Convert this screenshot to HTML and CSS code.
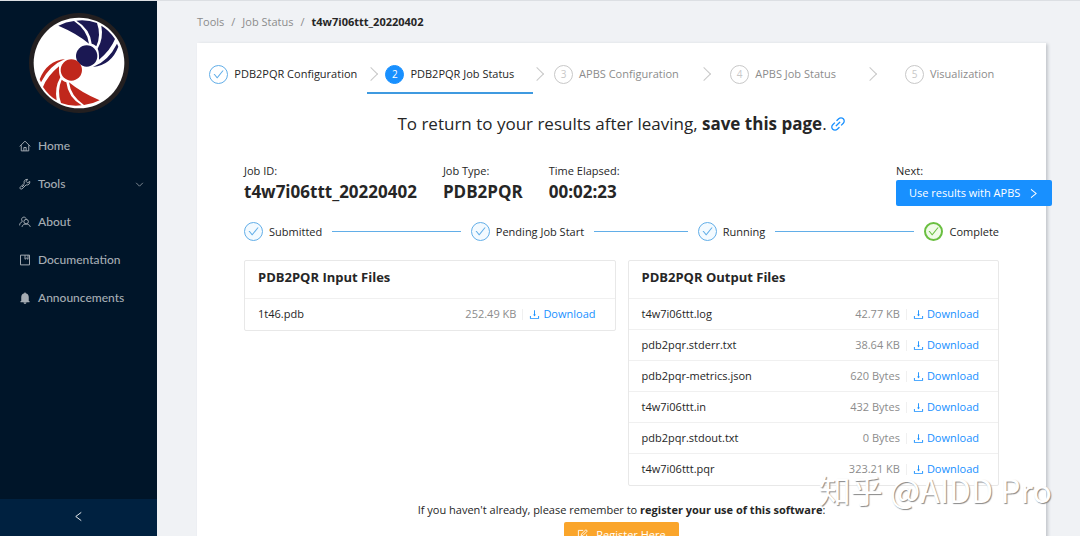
FILE: index.html
```html
<!DOCTYPE html>
<html lang="en">
<head>
  <meta charset="UTF-8" />
  <meta name="viewport" content="width=device-width, initial-scale=1.0" />
  <title>Job Status | t4w7i06ttt_20220402</title>
  <link rel="stylesheet" href="styles.css">
</head>
<body>
  <!-- shared icons -->
  <svg class="sprite" aria-hidden="true">
    <symbol id="check" viewBox="64 64 896 896"><path d="M912 190h-69.9c-9.8 0-19.1 4.5-25.1 12.2L404.7 724.5 207 474a32 32 0 00-25.1-12.2H112c-6.7 0-10.4 7.7-6.3 12.9l273.9 347c12.8 16.2 37.4 16.2 50.3 0l488.4-618.9c4.1-5.1.4-12.8-6.3-12.8z"/></symbol>
    <symbol id="right" viewBox="64 64 896 896"><path d="M765.7 486.8L314.9 134.7A7.97 7.97 0 00302 141v77.3c0 4.9 2.3 9.6 6.1 12.6l360 281.1-360 281.1c-3.9 3-6.1 7.7-6.1 12.6V883c0 6.7 7.7 10.4 12.9 6.3l450.8-352.1a31.96 31.96 0 000-50.4z"/></symbol>
    <symbol id="download" viewBox="64 64 896 896"><path d="M505.7 661a8 8 0 0012.6 0l112-141.7c4.1-5.2.4-12.9-6.3-12.9h-74.1V168c0-4.4-3.6-8-8-8h-60c-4.4 0-8 3.6-8 8v338.3H400c-6.7 0-10.4 7.7-6.3 12.9l112 141.8zM878 626h-60c-4.4 0-8 3.6-8 8v154H214V634c0-4.4-3.6-8-8-8h-60c-4.4 0-8 3.6-8 8v198c0 17.7 14.3 32 32 32h684c17.7 0 32-14.3 32-32V634c0-4.4-3.6-8-8-8z"/></symbol>
  </svg>

  <aside class="sidebar">
    <a class="logo" href="#" aria-label="Home page">
      <svg viewBox="84 36 306 306">
        <circle cx="237" cy="189" r="150" fill="#231f20"/>
        <circle cx="237" cy="189" r="136" fill="#fff"/>
        <g fill="#1b1853">
          <path d="M175 77Q198 65 222 63Q262 90 267 131Q230 100 175 77Z"/>
          <path d="M229 62Q262 58 291 69Q304 105 289 139Q281 132 275 131Q270 86 229 62Z"/>
          <path d="M304 77Q328 91 345 117Q332 150 297 179Q298 157 293 146Q311 115 304 77Z"/>
          <path d="M351 131L355 140Q334 195 279 201Q326 182 351 131Z"/>
          <circle cx="260" cy="168" r="32"/>
        </g>
        <g fill="#c0271c" transform="rotate(180 237 189)">
          <path d="M175 77Q198 65 222 63Q262 90 267 131Q230 100 175 77Z"/>
          <path d="M229 62Q262 58 291 69Q304 105 289 139Q281 132 275 131Q270 86 229 62Z"/>
          <path d="M304 77Q328 91 345 117Q332 150 297 179Q298 157 293 146Q311 115 304 77Z"/>
          <path d="M351 131L355 140Q334 195 279 201Q326 182 351 131Z"/>
          <circle cx="260" cy="168" r="32"/>
        </g>
      </svg>
    </a>
    <nav class="menu">
      <a href="#">
        <svg class="line" viewBox="0 0 16 16"><path d="M1 8.500L8 1.500l7 7M3 7v7.500h10V7M6.500 14.500V10h3v4.500"/></svg>
        Home
      </a>
      <a href="#">
        <svg class="line" viewBox="0 0 16 16"><path d="M1.500 12.500L7 7C6 4 8 1.500 11.500 1.800L9.500 4.500l2 2 2.800-2C15 7.500 12.500 10 9.500 9.200L4 14.500c-1.500 1-3.500-.5-2.500-2zM4 12l3-3"/></svg>
        Tools
        <svg class="line arrow" viewBox="0 0 16 16"><path d="M2 5l6 6 6-6"/></svg>
      </a>
      <a href="#">
        <svg class="line" viewBox="0 0 16 16"><circle cx="9.500" cy="7.500" r="3"/><path d="M4 14.500c.5-5 10.500-5 11 0M5.500 7.500C2 6 3.500 1.500 6.500 1.500c1.500 0 2.500.8 3 2M.8 12.500c.2-2.500 1.200-4 3.200-4.800"/></svg>
        About
      </a>
      <a href="#">
        <svg class="line" viewBox="0 0 16 16"><path d="M2 1.500h12v13H2zM8 1.500v5.500l2-1.500L12 7V1.500"/></svg>
        Documentation
      </a>
      <a href="#">
        <svg class="solid" viewBox="0 0 16 16"><path d="M8 0l1 1.500c2.500.5 4 2.500 4 5V12h1v1.500H2V12h1V6.500c0-2.500 1.500-4.500 4-5zM6 14h4c0 2.500-4 2.500-4 0z"/></svg>
        Announcements
      </a>
    </nav>
    <button class="trigger" aria-label="Collapse menu">
      <svg class="line" viewBox="0 0 16 16"><path d="M12 2L4 8l8 6"/></svg>
    </button>
  </aside>

  <main>
    <nav class="breadcrumb">
      <a href="#">Tools</a><span>/</span><a href="#">Job Status</a><span>/</span><b>t4w7i06ttt_20220402</b>
    </nav>

    <section class="panel">
      <ol class="workflow">
        <li class="done"><span class="dot"><svg><use href="#check"/></svg></span>PDB2PQR Configuration</li>
        <li class="active"><span class="dot">2</span>PDB2PQR Job Status</li>
        <li><span class="dot">3</span>APBS Configuration</li>
        <li><span class="dot">4</span>APBS Job Status</li>
        <li><span class="dot">5</span>Visualization</li>
      </ol>

      <h2>
        To return to your results after leaving, <b>save this page</b>.<a href="#" aria-label="Link to this page"><svg viewBox="64 64 896 896"><path d="M574 665.4a8.03 8.03 0 00-11.3 0L446.5 781.6c-53.8 53.8-144.6 59.5-204 0-59.5-59.5-53.8-150.2 0-204l116.2-116.2c3.1-3.1 3.1-8.2 0-11.3l-39.8-39.8a8.03 8.03 0 00-11.3 0L191.4 526.5c-84.6 84.6-84.6 221.5 0 306s221.5 84.6 306 0l116.2-116.2c3.1-3.1 3.1-8.2 0-11.3L574 665.4zm258.6-474c-84.6-84.6-221.5-84.6-306 0L410.3 307.6a8.03 8.03 0 000 11.3l39.7 39.7c3.1 3.1 8.2 3.1 11.3 0l116.2-116.2c53.8-53.8 144.6-59.5 204 0 59.5 59.5 53.8 150.2 0 204L665.3 562.6a8.03 8.03 0 000 11.3l39.8 39.8c3.1 3.1 8.2 3.1 11.3 0l116.2-116.2c84.5-84.6 84.5-221.5 0-306.1zM610.1 372.3a8.03 8.03 0 00-11.3 0L372.3 598.7a8.03 8.03 0 000 11.3l39.6 39.6c3.1 3.1 8.2 3.1 11.3 0l226.4-226.4c3.1-3.1 3.1-8.2 0-11.3l-39.5-39.6z"/></svg></a>
      </h2>

      <div class="content">
        <div class="job-info">
          <div>Job ID:<strong>t4w7i06ttt_20220402</strong></div>
          <div>Job Type:<strong>PDB2PQR</strong></div>
          <div>Time Elapsed:<strong>00:02:23</strong></div>
          <div class="next">Next:<button class="btn primary">Use results with APBS <svg><use href="#right"/></svg></button></div>
        </div>

        <ol class="progress">
          <li><span class="dot"><svg><use href="#check"/></svg></span>Submitted</li>
          <li><span class="dot"><svg><use href="#check"/></svg></span>Pending Job Start</li>
          <li><span class="dot"><svg><use href="#check"/></svg></span>Running</li>
          <li class="complete"><span class="dot"><svg><use href="#check"/></svg></span>Complete</li>
        </ol>

        <div class="files">
          <div class="file-card">
            <h3>PDB2PQR Input Files</h3>
            <table>
              <tr><td>1t46.pdb</td><td class="size">252.49 KB</td><td class="get"><a href="#"><svg><use href="#download"/></svg>Download</a></td></tr>
            </table>
          </div>
          <div class="file-card">
            <h3>PDB2PQR Output Files</h3>
            <table>
              <tr><td>t4w7i06ttt.log</td><td class="size">42.77 KB</td><td class="get"><a href="#"><svg><use href="#download"/></svg>Download</a></td></tr>
              <tr><td>pdb2pqr.stderr.txt</td><td class="size">38.64 KB</td><td class="get"><a href="#"><svg><use href="#download"/></svg>Download</a></td></tr>
              <tr><td>pdb2pqr-metrics.json</td><td class="size">620 Bytes</td><td class="get"><a href="#"><svg><use href="#download"/></svg>Download</a></td></tr>
              <tr><td>t4w7i06ttt.in</td><td class="size">432 Bytes</td><td class="get"><a href="#"><svg><use href="#download"/></svg>Download</a></td></tr>
              <tr><td>pdb2pqr.stdout.txt</td><td class="size">0 Bytes</td><td class="get"><a href="#"><svg><use href="#download"/></svg>Download</a></td></tr>
              <tr><td>t4w7i06ttt.pqr</td><td class="size">323.21 KB</td><td class="get"><a href="#"><svg><use href="#download"/></svg>Download</a></td></tr>
            </table>
          </div>
        </div>

        <div class="register">
          <p>If you haven't already, please remember to <b>register your use of this software</b>:</p>
          <button class="btn orange"><svg class="line" viewBox="0 0 16 16"><path d="M9 2H2v12h12V8M6 10l.5-2.500L13 1l2 2-6.500 6.500z"/></svg> Register Here</button>
        </div>
      </div>
    </section>
  </main>

  <div class="watermark">知乎 @AIDD Pro</div>
</body>
</html>
```

FILE: styles.css
```css
:root {
  --navy: #001529;
  --navy-light: #002140;
  --blue: #1890ff;
  --blue-soft: #62aee8;
  --green: #6abf40;
  --orange: #faa52b;
  --text: #262626;
  --muted: #8c8c8c;
  --line: #e8e8e8;
}

* {
  margin: 0;
  padding: 0;
  box-sizing: border-box;
}

body {
  font-family: "Open Sans", "Noto Sans", sans-serif;
  font-size: 11px;
  line-height: 18px;
  color: var(--text);
  background: #f0f2f5;
  height: 100vh;
  display: flex;
  overflow: hidden;
  border-top: 1px solid #dcdfe3;
}

a {
  color: var(--blue);
  text-decoration: none;
}

ol {
  list-style: none;
}

svg {
  width: 11px;
  height: 11px;
  fill: currentColor;
}

.sprite {
  display: none;
}

.line {
  fill: none;
  stroke: currentColor;
  stroke-width: 1.3;
}

/* Sidebar */
.sidebar {
  flex: 0 0 157px;
  background: var(--navy);
  display: flex;
  flex-direction: column;
}

.logo {
  display: flex;
  justify-content: center;
  padding-top: 11px;
}

.logo svg {
  width: 102px;
  height: 102px;
}

.menu {
  flex: 1;
  padding-top: 13px;
  font-family: Lato, sans-serif;
  font-size: 12px;
  font-weight: 500;
}

.menu a {
  display: flex;
  align-items: center;
  gap: 7px;
  height: 38px;
  padding: 0 13px 0 19px;
  color: #a6adb4;
}

.menu svg {
  width: 12px;
  height: 12px;
}

.menu .arrow {
  width: 9px;
  height: 9px;
  margin-left: auto;
}

.trigger {
  height: 37px;
  border: none;
  background: var(--navy-light);
  color: #fff;
  cursor: pointer;
}

/* Main area */
main {
  flex: 1;
  padding: 12px 34px 0 40px;
}

.breadcrumb {
  color: var(--muted);
}

.breadcrumb a {
  color: var(--muted);
}

.breadcrumb span {
  margin: 0 7px;
}

.breadcrumb b {
  color: var(--text);
}

.panel {
  height: 100%;
  margin-top: 12px;
  background: #fff;
  box-shadow: 2px 1px 3px #c4c7cc;
}

.dot {
  flex: none;
  width: 19px;
  height: 19px;
  border: 1px solid currentColor;
  border-radius: 50%;
  display: flex;
  align-items: center;
  justify-content: center;
  font-size: 10px;
}

/* Workflow steps */
.workflow {
  display: flex;
  padding: 13px 13px 0 3px;
}

.workflow li {
  flex: 1;
  position: relative;
  display: flex;
  align-items: center;
  justify-content: center;
  gap: 6px;
  height: 38px;
  border-bottom: 2px solid transparent;
  white-space: nowrap;
  color: var(--muted);
}

.workflow li + li::before {
  content: "";
  position: absolute;
  left: -1px;
  top: 13px;
  width: 9px;
  height: 9px;
  border: solid #c8c8c8;
  border-width: 1px 1px 0 0;
  transform: rotate(45deg);
}

.workflow .dot {
  color: #c8c8c8;
}

.workflow .done,
.workflow .active {
  color: var(--text);
}

.workflow .done .dot {
  color: var(--blue-soft);
}

.workflow .active {
  border-bottom-color: #3f9ae0;
}

.workflow .active .dot {
  background: var(--blue);
  border-color: var(--blue);
  color: #fff;
}

h2 {
  padding-top: 17px;
  font-size: 17px;
  font-weight: 400;
  line-height: 26px;
  text-align: center;
}

h2 svg {
  width: 16px;
  height: 16px;
  margin-left: 3px;
  vertical-align: -2px;
}

.content {
  padding: 0 47px;
}

/* Job details */
.job-info {
  display: flex;
  gap: 26px;
  margin-top: 25px;
  white-space: nowrap;
}

.job-info strong {
  display: block;
  font-size: 17px;
  line-height: 24px;
}

.next {
  width: 103px;
  margin-left: auto;
}

.btn {
  display: flex;
  align-items: center;
  gap: 8px;
  height: 26px;
  padding: 0 13px;
  border: none;
  border-radius: 2px;
  font: inherit;
  color: #fff;
  white-space: nowrap;
  cursor: pointer;
}

.primary {
  background: var(--blue);
}

.orange {
  background: var(--orange);
}

.progress {
  display: flex;
  gap: 10px;
  margin-top: 16px;
}

.progress li {
  flex: 1;
  display: flex;
  align-items: center;
  gap: 6px;
  white-space: nowrap;
}

.progress li:not(.complete)::after {
  content: "";
  flex: 1;
  height: 1px;
  margin-left: 4px;
  background: var(--blue-soft);
}

.progress .dot {
  color: var(--blue-soft);
  background: #f3faff;
}

.progress .complete {
  flex: none;
}

.progress .complete .dot {
  color: var(--green);
  background: #f0fbe8;
  border-width: 2px;
}

/* File lists */
.files {
  display: flex;
  align-items: flex-start;
  gap: 12px;
  margin-top: 19px;
}

.file-card {
  flex: 1;
  border: 1px solid var(--line);
  border-radius: 2px;
}

.file-card h3 {
  padding: 5px 13px 10px;
  font-size: 13px;
  line-height: 22px;
}

.file-card table {
  width: 100%;
  border-collapse: collapse;
}

.file-card td {
  height: 31px;
  padding-left: 13px;
  border-top: 1px solid #f0f0f0;
}

.file-card .size {
  padding-right: 6px;
  text-align: right;
  color: var(--muted);
}

.file-card .get {
  width: 89px;
  padding: 0 19px 0 0;
}

.get a {
  display: flex;
  align-items: center;
  gap: 3px;
  padding-left: 6px;
  line-height: 10px;
  border-left: 1px solid #f0f0f0;
}

.register {
  display: flex;
  flex-direction: column;
  align-items: center;
  gap: 3px;
  margin-top: 15px;
}

/* Watermark lies over the page corner */
.watermark {
  position: absolute;
  right: 28px;
  bottom: 27px;
  font-family: "Noto Sans CJK SC", sans-serif;
  font-size: 32px;
  line-height: 40px;
  color: #fff;
  text-shadow: 1px 1px 1px #888;
  pointer-events: none;
}
```
